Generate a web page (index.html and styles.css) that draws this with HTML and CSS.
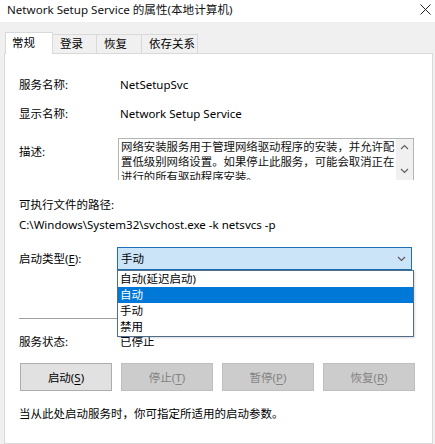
FILE: index.html
```html
<!DOCTYPE html>
<html lang="zh-CN">
<head>
<meta charset="utf-8">
<link rel="stylesheet" href="styles.css">
</head>
<body>
<div class="window">
  <div class="titlebar">
    <span class="title">Network Setup Service 的属性(本地计算机)</span>
    <svg class="close" width="11" height="11" viewBox="0 0 11 11"><path d="M0.5 0.5L10.5 10.5M10.5 0.5L0.5 10.5" stroke="#222" stroke-width="1" fill="none"/></svg>
  </div>
  <div class="tabstrip">
    <div class="tab active">常规</div>
    <div class="tab t2">登录</div>
    <div class="tab t3">恢复</div>
    <div class="tab t4">依存关系</div>
  </div>
  <div class="panel">
    <div class="row r1"><span class="label">服务名称:</span><span>NetSetupSvc</span></div>
    <div class="row r2"><span class="label">显示名称:</span><span>Network Setup Service</span></div>
    <div class="row desc-row">
      <span class="label desc-label">描述:</span>
      <div class="descbox">
        <div class="desctext">网络安装服务用于管理网络驱动程序的安装，并允许配置低级别网络设置。如果停止此服务，可能会取消正在进行的所有驱动程序安装。</div>
        <div class="vscroll">
          <svg width="9" height="6" viewBox="0 0 9 6"><path d="M1 5L4.5 1.5L8 5" stroke="#606060" stroke-width="1.2" fill="none"/></svg>
          <svg width="9" height="6" viewBox="0 0 9 6"><path d="M1 1L4.5 4.5L8 1" stroke="#606060" stroke-width="1.2" fill="none"/></svg>
        </div>
      </div>
    </div>
    <div class="pathlabel">可执行文件的路径:</div>
    <div class="path">C:\Windows\System32\svchost.exe -k netsvcs -p</div>
    <div class="row startup">
      <span class="label">启动类型(<u>E</u>):</span>
      <div class="combo">
        <span>手动</span>
        <svg width="9" height="6" viewBox="0 0 9 6"><path d="M1 1L4.5 4.5L8 1" stroke="#555" stroke-width="1.1" fill="none"/></svg>
        <ul class="droplist">
          <li>自动(延迟启动)</li>
          <li class="sel">自动</li>
          <li>手动</li>
          <li>禁用</li>
        </ul>
      </div>
    </div>
    <div class="sep"></div>
    <div class="row status"><span class="label">服务状态:</span><span>已停止</span></div>
    <div class="buttons">
      <div class="btn">启动(<u>S</u>)</div>
      <div class="btn disabled">停止(<u>T</u>)</div>
      <div class="btn disabled">暂停(<u>P</u>)</div>
      <div class="btn disabled">恢复(<u>R</u>)</div>
    </div>
    <div class="hint">当从此处启动服务时，你可指定所适用的启动参数。</div>
  </div>
</div>
</body>
</html>
```

FILE: styles.css
```css
html, body {
  margin: 0;
  padding: 0;
  background: #f0f0f0;
}
.window {
  width: 435px;
  height: 444px;
  overflow: hidden;
  display: flex;
  flex-direction: column;
  background: #f0f0f0;
  font-family: "Noto Sans", "Noto Sans CJK SC", sans-serif;
  font-size: 11.5px;
  color: #000;
}
.titlebar {
  height: 22px;
  background: #fff;
  display: flex;
  align-items: center;
  justify-content: space-between;
  padding: 0 3px 0 7px;
  flex: none;
}
.title {
  font-size: 11.6px;
  line-height: 16px;
  color: #111;
  margin-top: -2px;
}
.close {
  margin-top: -4px;
  margin-right: 1px;
}
.tabstrip {
  display: flex;
  align-items: flex-end;
  padding: 11px 0 0 5px;
  height: 20px;
  flex: none;
  position: relative;
  z-index: 1;
}
.tab {
  box-sizing: border-box;
  height: 19px;
  line-height: 18px;
  padding: 0 0 0 7px;
  border: 1px solid #d9d9d9;
  border-bottom: none;
  margin-left: -1px;
  background: #f0f0f0;
}
.t2 { width: 45px; }
.t3 { width: 46px; padding-left: 7px; }
.t4 { width: 57px; }
.tab.active {
  background: #fff;
  height: 22px;
  line-height: 20px;
  padding-left: 6px;
  width: 48px;
  margin-left: 0;
  margin-bottom: -1px;
}
.panel {
  flex: 1;
  background: #fff;
  border: 1px solid #d9d9d9;
  margin: 0 2px 0 4px;
  padding: 0 0 0 14px;
  display: flex;
  flex-direction: column;
  position: relative;
}
.row {
  display: flex;
  align-items: center;
  line-height: 16px;
}
.label {
  width: 101px;
  flex: none;
}
.r1 { margin-top: 23px; }
.r2 { margin-top: 13px; }
.desc-row {
  margin-top: 16px;
  align-items: flex-start;
}
.desc-label { margin-top: 6px; }
.descbox {
  width: 294px;
  height: 41px;
  border: 1px solid #b4b4b4;
  border-bottom: none;
  display: flex;
  overflow: hidden;
  margin-left: -2px;
}
.desctext {
  flex: 1;
  padding: 0 0 0 2px;
  line-height: 15px;
  font-size: 11.4px;
  color: #111;
}
.vscroll {
  width: 17px;
  flex: none;
  background: #f0f0f0;
  display: flex;
  flex-direction: column;
  align-items: center;
  justify-content: space-between;
  padding: 5px 0 6px;
  box-sizing: border-box;
}
.pathlabel {
  margin-top: 17px;
  line-height: 16px;
}
.path {
  margin-top: 4px;
  line-height: 16px;
}
.startup {
  margin-top: 14px;
}
.combo {
  position: relative;
  width: 295px;
  height: 23px;
  box-sizing: border-box;
  border: 1px solid #1e6fb3;
  background: #cce4f7;
  display: flex;
  align-items: center;
  justify-content: space-between;
  padding: 0 5px 0 3px;
  margin-left: -3px;
}
.droplist {
  position: absolute;
  left: -1px;
  top: 22px;
  width: 297px;
  margin: 0;
  padding: 0 0 1px;
  list-style: none;
  background: #fff;
  border: 1px solid #4f6d8a;
  box-sizing: border-box;
  box-shadow: 1px 1px 2px rgba(0,0,0,0.15);
  z-index: 2;
}
.droplist li {
  height: 16px;
  line-height: 16px;
  padding-left: 2px;
}
.droplist li.sel {
  background: #0078d7;
  color: #fff;
}
.sep {
  margin-top: 48px;
  height: 1px;
  background: #a0a0a0;
  width: 395px;
}
.status {
  margin-top: 15px;
}
.buttons {
  display: grid;
  grid-template-columns: repeat(4, 92px);
  column-gap: 9px;
  margin-top: 13px;
  margin-left: 1px;
}
.btn {
  height: 28px;
  box-sizing: border-box;
  border: 1px solid #adadad;
  background: #e1e1e1;
  display: flex;
  align-items: center;
  justify-content: center;
}
.btn.disabled {
  background: #cccccc;
  border-color: #bfbfbf;
  color: #838383;
}
.hint {
  margin-top: 15px;
  line-height: 16px;
}
u { text-decoration-thickness: 1px; text-underline-offset: 2px; }
```
